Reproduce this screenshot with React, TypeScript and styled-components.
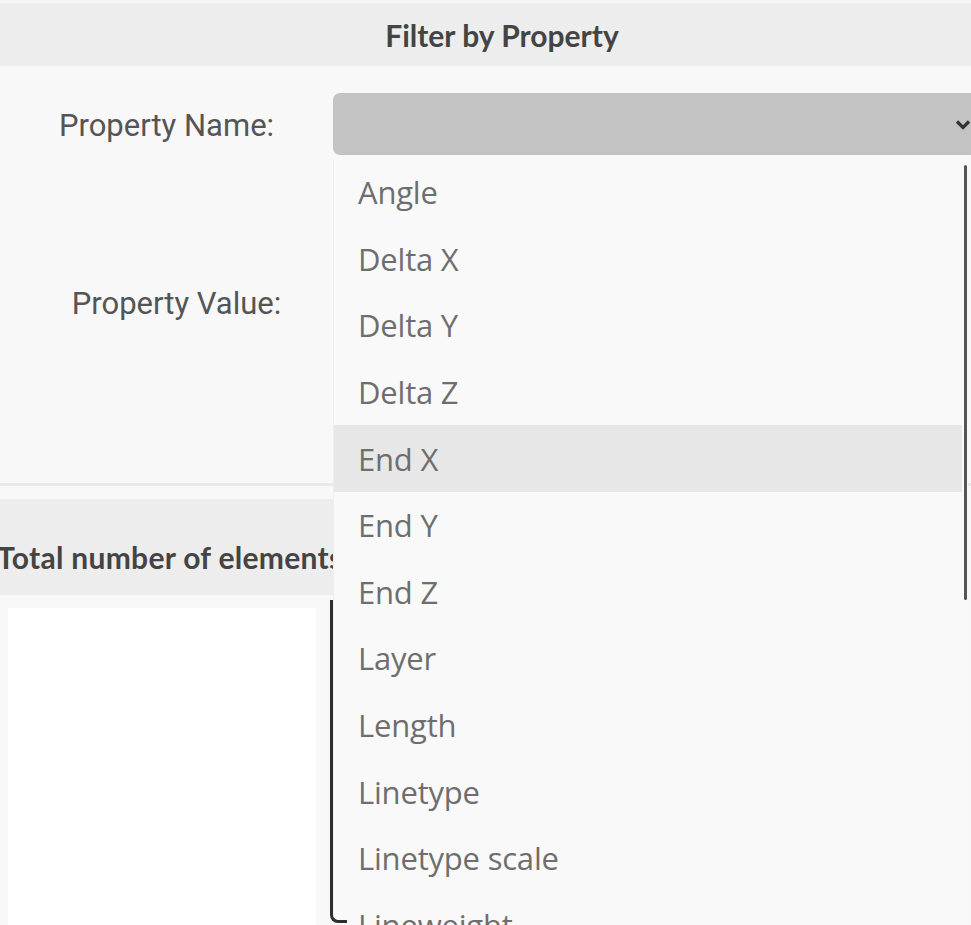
import React from 'react';
import styled, { createGlobalStyle } from 'styled-components';

const GlobalStyle = createGlobalStyle`
  html, body {
    margin: 0;
    padding: 0;
    background: #f8f8f8;
    overflow: hidden;
  }
`;

const propertyNames = [
  'Angle',
  'Delta X',
  'Delta Y',
  'Delta Z',
  'End X',
  'End Y',
  'End Z',
  'Layer',
  'Length',
  'Linetype',
  'Linetype scale',
  'Lineweight',
  'Start X',
];

const App: React.FC = () => {
  const hovered = 'End X';

  return (
    <Page>
      <GlobalStyle />
      <FilterPanel>
        <PanelTitle>Filter by Property</PanelTitle>
        <FormGrid>
          <FieldLabel>Property Name:</FieldLabel>
          <SelectWrap>
            <SelectBox>
              <svg width="16" height="11" viewBox="0 0 16 11">
                <polyline points="2,2.5 8,8.5 14,2.5" fill="none" stroke="#333" strokeWidth="3.2" />
              </svg>
            </SelectBox>
            <Dropdown>
              {propertyNames.map((name) => (
                <Option key={name} $active={name === hovered}>
                  {name}
                </Option>
              ))}
              <ScrollThumb />
              <ShadowEdge />
            </Dropdown>
          </SelectWrap>
          <FieldLabel $shift={20}>Property Value:</FieldLabel>
          <ValueInput />
        </FormGrid>
      </FilterPanel>
      <ResultsPanel>
        <ResultsColumn>
          <ColumnTitle>Total number of elements: 0</ColumnTitle>
          <ListBox />
        </ResultsColumn>
      </ResultsPanel>
    </Page>
  );
};

export default App;

const Page = styled.div`
  width: 1004px;
  min-height: 925px;
  background: #f8f8f8;
  display: flex;
  flex-direction: column;
`;

const FilterPanel = styled.section`
  display: flex;
  flex-direction: column;
  border-bottom: 3px solid #e9e9e9;
`;

const PanelTitle = styled.h2`
  margin: 0;
  height: 63px;
  border-top: 3px solid #f6f6f6;
  background: #ededed;
  display: flex;
  align-items: center;
  justify-content: center;
  font-family: Lato, 'Liberation Sans', sans-serif;
  font-weight: 700;
  font-size: 30px;
  color: #444;
`;

const FormGrid = styled.div`
  display: grid;
  grid-template-columns: 333px 1fr;
  grid-template-rows: 62px 235px;
  row-gap: 30px;
  padding: 27px 19px 63px 0;
`;

const FieldLabel = styled.label<{ $shift?: number }>`
  display: flex;
  align-items: center;
  justify-content: center;
  padding: 2px 0 0 ${(p) => p.$shift ?? 0}px;
  font-family: Roboto, 'Liberation Sans', sans-serif;
  font-size: 31px;
  color: #555;
`;

const SelectWrap = styled.div`
  position: relative;
`;

const SelectBox = styled.div`
  height: 100%;
  background: #c2c3c2;
  border-radius: 7px;
  display: flex;
  align-items: center;
  justify-content: flex-end;
  padding-right: 14px;
`;

const Dropdown = styled.ul`
  position: absolute;
  top: 66px;
  left: 0;
  width: 635px;
  height: 780px;
  margin: 0;
  padding: 0 6px 0 0;
  list-style: none;
  background: #f9f9f9;
  border-left: 1px solid #efefef;
  box-sizing: border-box;
  z-index: 10;
`;

const Option = styled.li<{ $active?: boolean }>`
  height: 66.6px;
  display: flex;
  align-items: center;
  padding-left: 24px;
  background: ${(p) => (p.$active ? '#e6e7e6' : 'transparent')};
  font-family: 'Open Sans', 'Liberation Sans', sans-serif;
  font-size: 31px;
  letter-spacing: -0.2px;
  color: #6e6e6e;
  white-space: nowrap;
`;

const ScrollThumb = styled.div`
  position: absolute;
  top: 6px;
  right: 1px;
  width: 3px;
  height: 435px;
  border-radius: 2px;
  background: #555;
`;

const ShadowEdge = styled.div`
  position: absolute;
  left: -4px;
  top: 441px;
  width: 14px;
  height: 320px;
  border-left: 3px solid #2e2e2e;
  border-bottom: 3px solid #2e2e2e;
  border-bottom-left-radius: 8px;
`;

const ValueInput = styled.div`
  border-left: 1px solid #e4e4e4;
  background: #f8f8f8;
`;

const ResultsPanel = styled.section`
  display: flex;
  padding-top: 13px;
`;

const ResultsColumn = styled.div`
  width: 333px;
  display: flex;
  flex-direction: column;
  gap: 13px;
`;

const ColumnTitle = styled.h3`
  margin: 0;
  height: 96px;
  background: #ededed;
  display: flex;
  align-items: center;
  padding-top: 20px;
  box-sizing: border-box;
  text-indent: -3px;
  font-family: Lato, 'Liberation Sans', sans-serif;
  font-weight: 700;
  font-size: 30px;
  letter-spacing: 0.3px;
  color: #444;
  white-space: nowrap;
  overflow: visible;
`;

const ListBox = styled.div`
  margin: 0 17px 0 8px;
  height: 330px;
  background: #fff;
`;
